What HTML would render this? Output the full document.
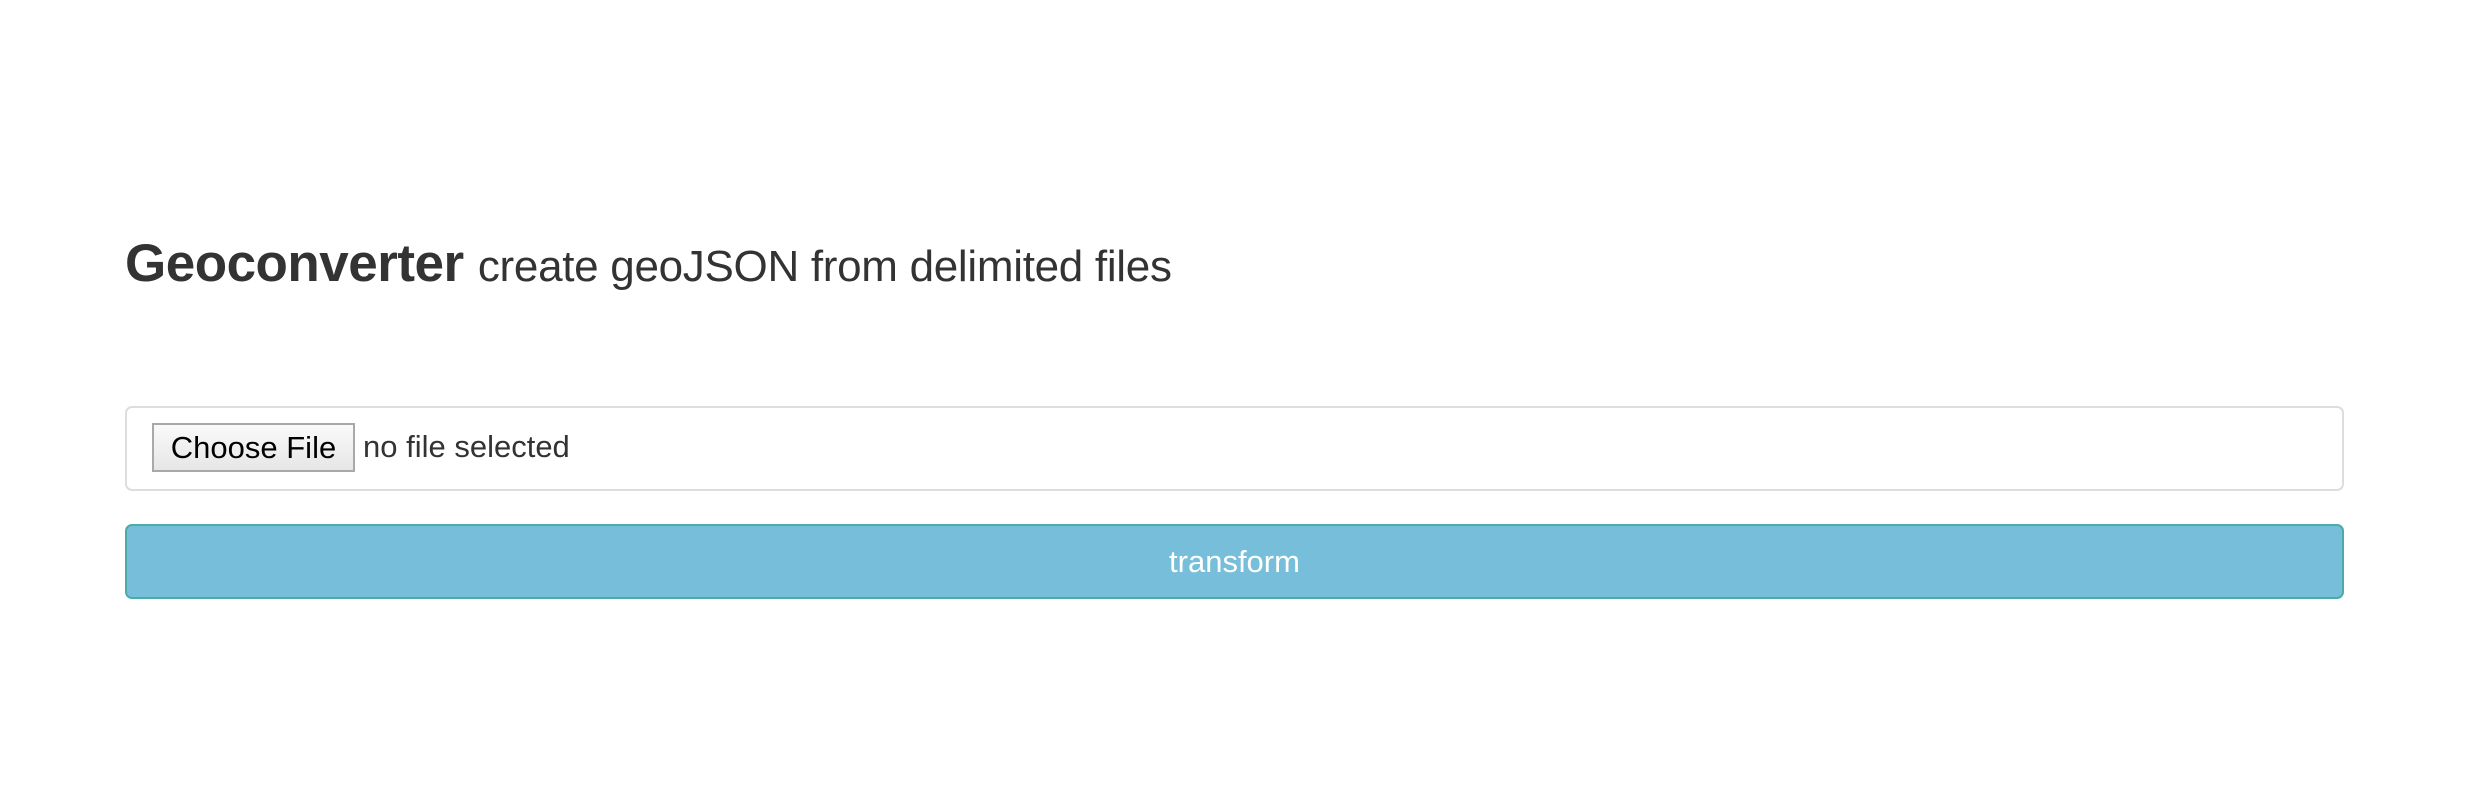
<!DOCTYPE html>
<html><head><style>
html,body{margin:0;background:#fff;width:2478px;height:810px;overflow:hidden;font-family:"Liberation Sans",Arial,sans-serif;}
h1{position:absolute;left:125px;top:229px;margin:0;font-size:53px;font-weight:bold;color:#333;white-space:nowrap;line-height:70px;letter-spacing:-0.5px}
h1 small{font-size:44px;font-weight:normal;color:#333;letter-spacing:-0.3px}
.panel{position:absolute;left:125px;top:406px;width:2215px;height:81px;border:2px solid #ddd;border-radius:7px;background:#fff}
.cf{position:absolute;left:25px;top:15px;width:203px;height:49px;border:2px solid #a9a9a9;background:linear-gradient(#fafafa,#e6e6e6);box-sizing:border-box;font-size:31px;line-height:45px;text-align:center;color:#000}
.nf{position:absolute;left:236px;top:17px;font-size:31px;line-height:44px;color:#333}
.btn{position:absolute;left:125px;top:524px;width:2215px;height:71px;border:2px solid #4aacaa;border-radius:7px;background:#77bedb;color:#fff;font-size:31px;line-height:71px;text-align:center}
</style></head><body>
<h1>Geoconverter <small>create geoJSON from delimited files</small></h1>
<div class="panel"><div class="cf">Choose File</div><div class="nf">no file selected</div></div>
<div class="btn">transform</div>
</body></html>
